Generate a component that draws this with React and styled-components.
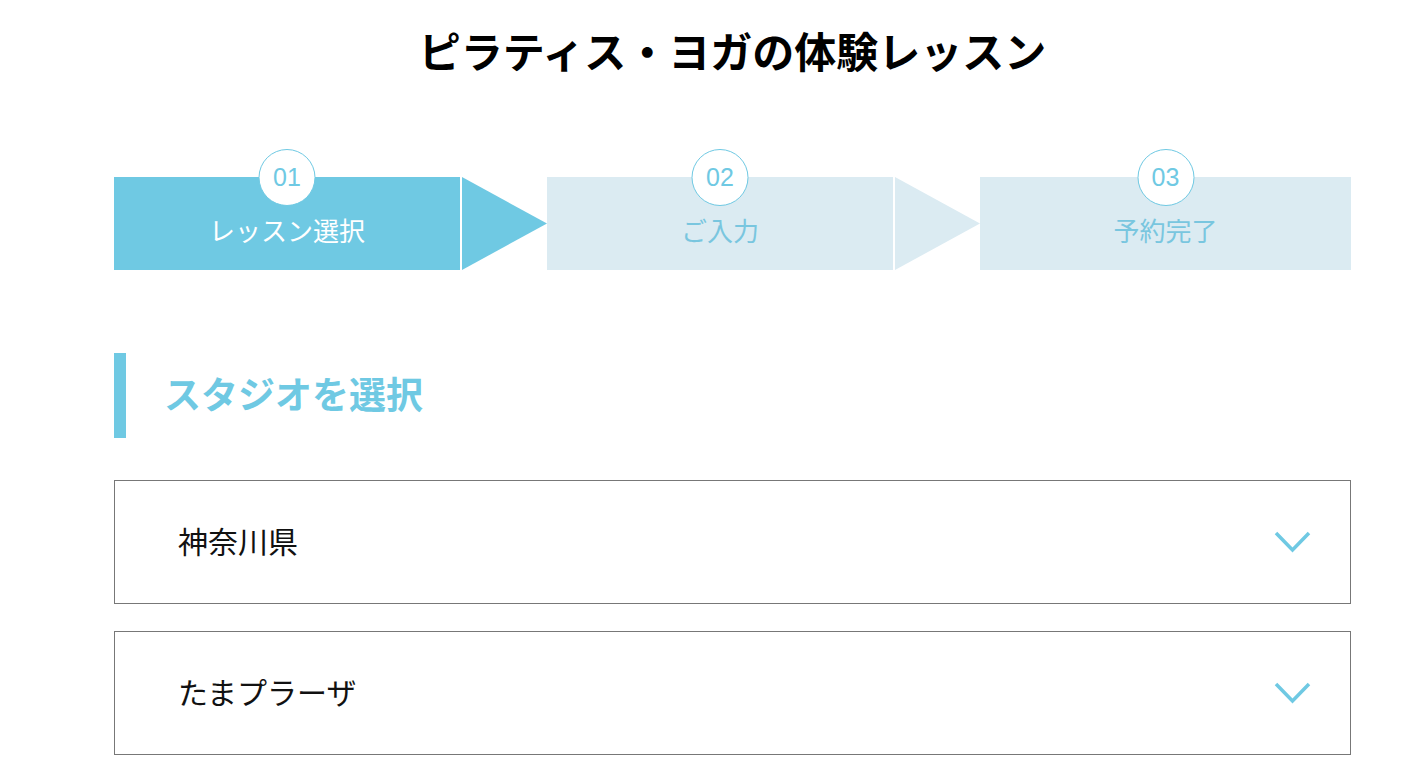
import React from 'react'
import styled, { createGlobalStyle } from 'styled-components'

const GlobalStyle = createGlobalStyle`
  body {
    margin: 0;
    background: #fff;
    font-family: "Noto Sans CJK JP", "Noto Sans", sans-serif;
    color: #111;
  }
`

const ACTIVE = '#6fc9e3'
const IDLE = '#dbebf2'

const Page = styled.div`
  width: 1237px;
  margin-left: 114px;
  padding-bottom: 40px;
`

const Title = styled.h1`
  margin: 0;
  padding-top: 21px;
  text-align: center;
  font-size: 42px;
  line-height: 58px;
  font-weight: 700;
  color: #000;
`

const Steps = styled.div`
  display: flex;
  margin-top: 98px;
  height: 93px;
`

const Step = styled.div`
  position: relative;
  width: ${p => (p.$last ? 'auto' : '346px')};
  flex: ${p => (p.$last ? 1 : 'none')};
  background: ${p => (p.$active ? ACTIVE : IDLE)};
  color: ${p => (p.$active ? '#fff' : '#79c6df')};
  display: flex;
  align-items: center;
  justify-content: center;
  padding-top: 12px;
  box-sizing: border-box;
  font-size: 26px;
  font-weight: 400;
`

const Num = styled.div`
  position: absolute;
  top: -28px;
  left: 50%;
  transform: translateX(-50%);
  width: 55px;
  height: 55px;
  border-radius: 50%;
  background: #fff;
  border: 1px solid ${ACTIVE};
  color: ${ACTIVE};
  display: flex;
  align-items: center;
  justify-content: center;
  font-family: "Liberation Sans", Arial, sans-serif;
  font-size: 25px;
`

const Arrow = styled.div`
  width: 85px;
  margin-left: 2px;
  height: 100%;
  background: ${p => (p.$active ? ACTIVE : IDLE)};
  clip-path: polygon(0 0, 100% 50%, 0 100%);
`

const Heading = styled.h2`
  margin: 83px 0 0;
  height: 85px;
  border-left: 12px solid ${ACTIVE};
  padding-left: 38px;
  padding-bottom: 5px;
  box-sizing: border-box;
  display: flex;
  align-items: center;
  font-size: 37px;
  font-weight: 700;
  color: ${ACTIVE};
`

const Selects = styled.div`
  margin-top: 42px;
  display: flex;
  flex-direction: column;
  gap: 27px;
`

const Select = styled.div`
  height: 124px;
  box-sizing: border-box;
  border: 1px solid #777;
  display: flex;
  align-items: center;
  justify-content: space-between;
  padding: 0 39px 5px 63px;
  font-size: 30px;
  color: #111;
`

const Chevron = () => (
  <svg width="37" height="24" viewBox="0 0 37 24" style={{ marginTop: 5 }}>
    <path d="M2 3 L18.5 20 L35 3" fill="none" stroke={ACTIVE} strokeWidth="3.5" />
  </svg>
)

const steps = [
  { num: '01', label: 'レッスン選択' },
  { num: '02', label: 'ご入力' },
  { num: '03', label: '予約完了' },
]

export default function App() {
  return (
    <Page>
      <GlobalStyle />
      <Title>ピラティス・ヨガの体験レッスン</Title>
      <Steps>
        {steps.map((s, i) => (
          <React.Fragment key={s.num}>
            <Step $active={i === 0} $last={i === steps.length - 1}>
              <Num>{s.num}</Num>
              {s.label}
            </Step>
            {i < steps.length - 1 && <Arrow $active={i === 0} />}
          </React.Fragment>
        ))}
      </Steps>
      <Heading>スタジオを選択</Heading>
      <Selects>
        <Select>
          神奈川県
          <Chevron />
        </Select>
        <Select>
          たまプラーザ
          <Chevron />
        </Select>
      </Selects>
    </Page>
  )
}
